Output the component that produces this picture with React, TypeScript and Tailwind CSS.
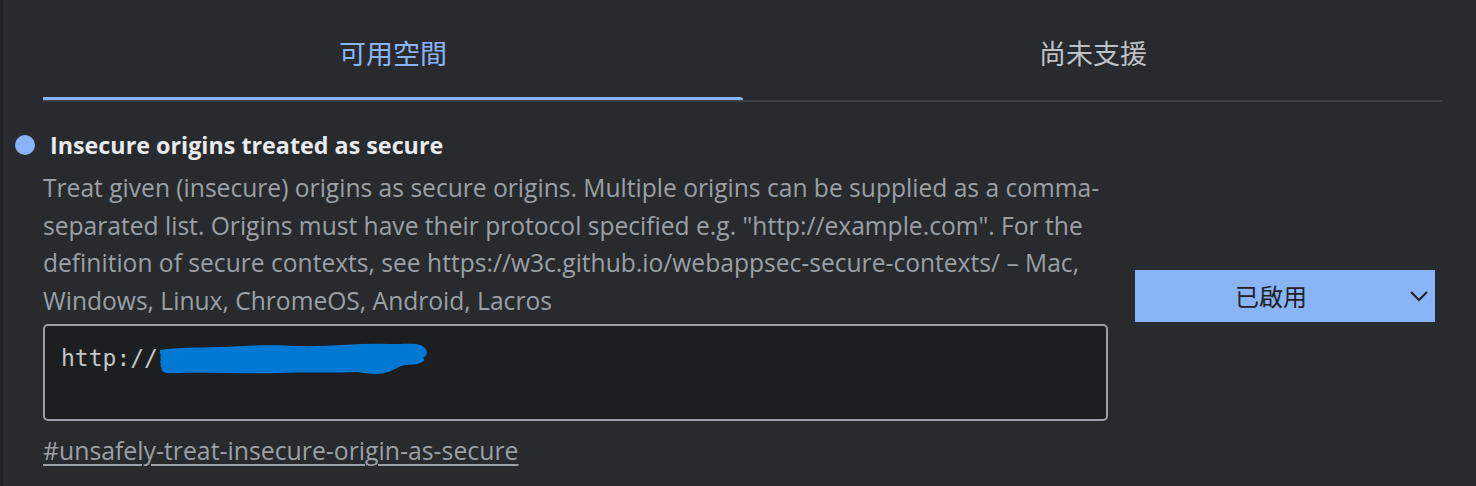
import React from "react";

export default function App() {
  return (
    <div className="w-[1476px] h-[486px] bg-[#292a2d] border-l-[3px] border-[#202124] overflow-hidden" style={{ fontFamily: '"Open Sans", "Noto Sans CJK TC", sans-serif' }}>
      <div className="pl-[40px] pr-[33px]">
        {/* Tabs */}
        <div className="grid grid-cols-2 border-b-2 border-[#3c4043]">
          <div className="relative h-[100px] flex items-center justify-center pt-[6px]">
            <span className="text-[27px] text-[#8ab4f8]" style={{ fontFamily: '"Noto Sans CJK TC", sans-serif' }}>可用空間</span>
            <div className="absolute left-0 right-0 bottom-0 h-[3px] bg-[#8ab4f8] rounded-tr-[3px]" />
          </div>
          <div className="h-[100px] flex items-center justify-center pt-[6px]">
            <span className="text-[27px] text-[#bdc1c6]" style={{ fontFamily: '"Noto Sans CJK TC", sans-serif' }}>尚未支援</span>
          </div>
        </div>

        {/* Experiment */}
        <div className="flex items-center pt-[28px]">
          <div className="w-[1065px] shrink-0">
            <div className="relative h-[30px] flex items-center">
              <span className="absolute left-[-28px] top-[5px] w-[20px] h-[20px] rounded-full bg-[#8ab4f8]" />
              <h2 className="pl-[7px] text-[23.3px] font-bold text-[#e8eaed] leading-[30px]">Insecure origins treated as secure</h2>
            </div>
            <p className="mt-[9px] text-[24.6px] leading-[37.7px] text-[#9aa0a6] whitespace-nowrap">
              Treat given (insecure) origins as secure origins. Multiple origins can be supplied as a comma-<br />
              separated list. Origins must have their protocol specified e.g. "http://example.com". For the<br />
              definition of secure contexts, see https://w3c.github.io/webappsec-secure-contexts/ – Mac,<br />
              Windows, Linux, ChromeOS, Android, Lacros
            </p>
            <div className="mt-[4px] h-[97px] rounded-[5px] border-2 border-[#9aa0a6] bg-[#1d1e20] pl-[16px] pt-[14px]">
              <div className="flex items-center h-[36px]">
                <span className="text-[23px] text-[#c4c7c5] leading-[36px]" style={{ fontFamily: '"DejaVu Sans Mono", monospace' }}>http://</span>
                <svg width="272" height="32" viewBox="0 0 272 32" className="ml-[0px] mt-[2px]">
                  <path
                    d="M2 7 C 20 4, 40 5, 60 4 C 90 3, 110 1, 140 3 C 170 4, 200 0, 230 1 C 250 1, 258 0, 262 2 C 270 5, 271 12, 265 15 C 269 18, 262 22, 248 22 C 240 23, 236 27, 230 29 C 222 32, 210 31, 200 29 C 180 30, 150 29, 120 30 C 90 31, 50 29, 20 30 C 8 31, 2 29, 4 25 C 1 23, 4 21, 2 19 C 4 16, 1 14, 3 12 C 1 10, 2 8, 2 7 Z"
                    fill="#0078d4"
                  />
                </svg>
              </div>
            </div>
            <div className="mt-[15px] h-[30px] flex items-center">
              <a className="text-[24.8px] text-[#9aa0a6] underline underline-offset-[4px] decoration-[1.5px]">#unsafely-treat-insecure-origin-as-secure</a>
            </div>
          </div>
          <div className="flex-1" />
          <div className="w-[300px] h-[52px] bg-[#8ab4f8] flex items-center mr-[8px] mt-[-4px] relative">
            <span className="flex-1 text-center pr-[28px] text-[24px] text-[#202124]" style={{ fontFamily: '"Noto Sans CJK TC", sans-serif' }}>已啟用</span>
            <svg width="18" height="11" viewBox="0 0 18 11" className="absolute left-[275px] top-[21px]">
              <path d="M1 1 L9 9 L17 1" fill="none" stroke="#202124" strokeWidth="2" />
            </svg>
          </div>
        </div>
      </div>
    </div>
  );
}
